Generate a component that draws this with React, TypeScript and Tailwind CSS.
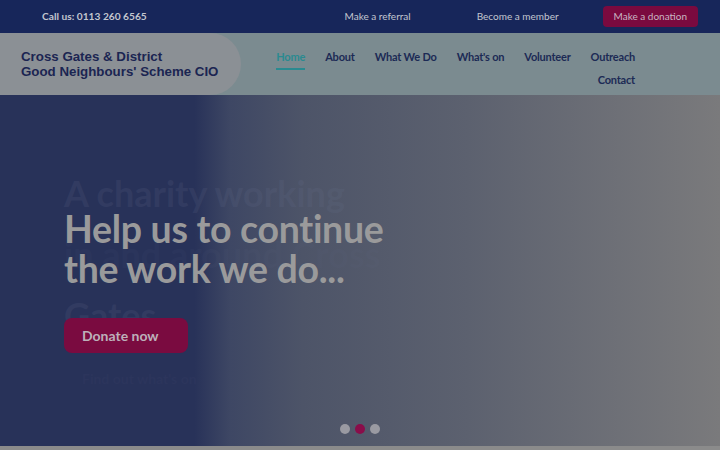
export default function App() {
  const nav = ['Home', 'About', 'What We Do', "What's on", 'Volunteer', 'Outreach'];
  return (
    <div className="w-[720px] h-[450px] overflow-hidden bg-[#8b8b8b] font-['Lato',sans-serif]">
      <div className="h-[33px] bg-[#17265a] flex items-center text-[10px] text-[#c3c6cf]">
        <div className="ml-[42px] font-bold text-[10.2px]">Call us: 0113 260 6565</div>
        <div className="ml-auto flex items-center">
          <span className="mr-[66px]">Make a referral</span>
          <span className="mr-[44px]">Become a member</span>
          <span className="mr-[22px] bg-[#7a0a3f] text-[#c8b6c2] rounded-[4px] px-[11px] py-[3px]">Make a donation</span>
        </div>
      </div>
      <div className="h-[62px] bg-[#7b8b90] flex">
        <div className="w-[241px] bg-[#8b9095] rounded-r-[40px] flex flex-col justify-center pl-[21px] font-['Liberation_Sans',sans-serif] font-bold text-[13.3px] leading-[15px] text-[#1b2552]">
          <div>Cross Gates &amp; District</div>
          <div>Good Neighbours' Scheme CIO</div>
        </div>
        <div className="flex-1 flex flex-col items-end pr-[85px] pt-[16px] text-[11px] font-bold text-[#1c2a55] tracking-[-0.2px]">
          <div className="flex gap-[20px]">
            {nav.map((n) => (
              <span key={n} className={n === 'Home' ? 'text-[#2a8a90] border-b-2 border-[#2a8a90] pb-[2px]' : ''}>
                {n}
              </span>
            ))}
          </div>
          <div className="mt-[2px]">Contact</div>
        </div>
      </div>
      <div className="relative h-[351px] bg-[linear-gradient(to_right,#283259_0%,#283259_27%,#3e4764_32%,#4d5468_42%,#5c616f_65%,#7a7a7c_100%)]">
        <div className="absolute left-[64px] top-[68px] text-[36px] leading-[61px] font-bold text-[#6a7290] opacity-[0.15]">
          <div>A charity working</div>
          <div className="opacity-40">in and around Cross</div>
          <div>Gates...</div>
        </div>
        <div className="relative pl-[64px] pt-[114px]">
          <div className="text-[37.5px] leading-[40px] font-bold text-[#9a9a9b] tracking-[-0.3px]">
            <div>Help us to continue</div>
            <div>the work we do...</div>
          </div>
          <div className="mt-[29px] w-[124px] h-[35px] rounded-[8px] bg-[#7a0b40] flex items-center pl-[18px] text-[14px] font-bold text-[#bdb0ba]">
            Donate now
          </div>
          <div className="mt-[15px] ml-[18px] text-[14px] font-bold text-[#2c355c]">Find out what's on</div>
        </div>
        <div className="absolute left-0 right-0 bottom-[12px] flex justify-center gap-[5px]">
          <span className="w-[10px] h-[10px] rounded-full bg-[#9a9aa2]" />
          <span className="w-[10px] h-[10px] rounded-full bg-[#8a0d4a]" />
          <span className="w-[10px] h-[10px] rounded-full bg-[#9a9aa2]" />
        </div>
      </div>
    </div>
  );
}
